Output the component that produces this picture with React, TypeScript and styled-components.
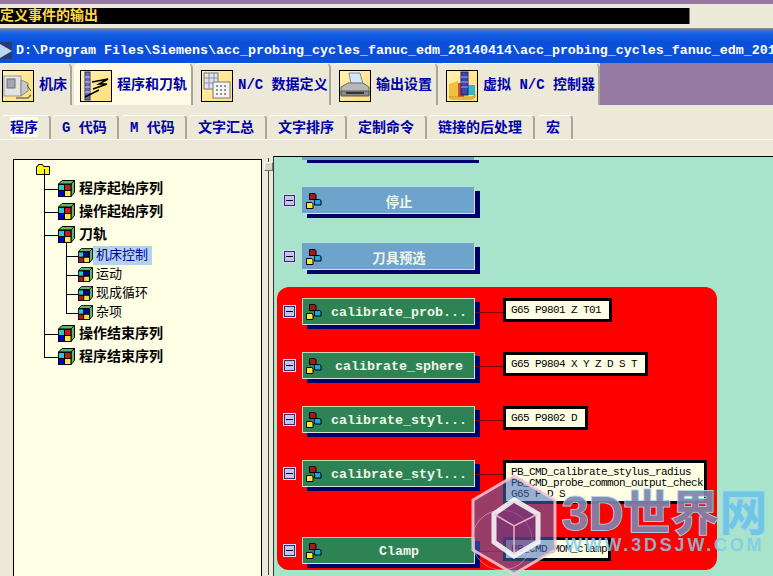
import React from "react";
import styled, { createGlobalStyle } from "styled-components";

const FONT = `"Liberation Mono", "Noto Sans CJK SC", monospace`;
const CREAM = "#ece9d8";

const GlobalStyle = createGlobalStyle`
  html, body { margin: 0; padding: 0; background: ${CREAM}; overflow: hidden; }
  #root { width: 773px; height: 576px; }
  * { box-sizing: border-box; }
`;

const Page = styled.div`
  position: relative;
  width: 773px;
  height: 576px;
  overflow: hidden;
  background: ${CREAM};
  font-family: ${FONT};
`;

const TopStrip = styled.div`
  height: 4px;
  background: #9479a3;
`;

const EventBand = styled.div`
  height: 24px;
  padding-top: 4px;
`;

const EventBar = styled.div`
  width: 690px;
  height: 16px;
  background: #000;
  border-right: 1px solid #777;
  color: #ffd84a;
  font-size: 14px;
  font-weight: 700;
  line-height: 17px;
  white-space: nowrap;
`;

const TitleBar = styled.div`
  height: 35px;
  padding-top: 9px;
  display: flex;
  align-items: center;
  gap: 4px;
  background: linear-gradient(#8f97a8 0, #5b6f9c 2px, #2a6fe8 3px, #1560e6 6px, #0a4fd8 14px, #0b50dc 100%);
  color: #fff;
  font-size: 13.33px;
  font-weight: 700;
  white-space: nowrap;
  overflow: hidden;
`;

const TabRow = styled.div`
  height: 42px;
  display: flex;
  align-items: flex-start;
  background: linear-gradient(90deg, ${CREAM} 600px, #9479a3 600px);
`;

const MainTab = styled.div<{ $w: number; $pad: number; $active?: boolean }>`
  width: ${({ $w }) => $w}px;
  height: 42px;
  margin-right: 2px;
  padding: 6px 0 0 ${({ $pad }) => $pad}px;
  display: flex;
  gap: 5px;
  background: ${({ $active }) => ($active ? "#fffbe6" : CREAM)};
  border-right: 2px solid #a9a699;
  border-top: 1px solid #fff;
  border-radius: 5px 5px 0 0;
  color: #0000a8;
  font-size: 14px;
  font-weight: 700;
  line-height: 30px;
  white-space: nowrap;
`;

const TabIcon = styled.div`
  width: 32px;
  height: 32px;
  flex: none;
  border: 1px solid #000;
  background: linear-gradient(135deg, #fff2b0, #ffdf78);
`;

const SubTabRow = styled.div`
  height: 35px;
  margin-bottom: 18px;
  padding: 10px 0 0 1px;
  display: flex;
  align-items: flex-start;
  gap: 2px;
  border-bottom: 1px solid #fbfaf4;
`;

const SubTab = styled.div<{ $w: number }>`
  width: ${({ $w }) => $w}px;
  height: 24px;
  padding-left: 9px;
  border-top: 1px solid #fff;
  border-right: 2px solid #a9a699;
  border-radius: 4px 4px 0 0;
  color: #0000a8;
  font-size: 14px;
  font-weight: 700;
  line-height: 25px;
  white-space: nowrap;
`;

const SubTabLabel = styled.span<{ $active?: boolean }>`
  display: inline-block;
  height: 20px;
  line-height: 22px;
  background: ${({ $active }) => ($active ? "#fffbe6" : "transparent")};
`;

const Workspace = styled.div`
  height: 418px;
  display: flex;
  align-items: flex-start;
  padding-left: 13px;
`;

const TreePane = styled.div`
  width: 249px;
  height: 417px;
  margin-top: 1px;
  border: 1px solid #000;
  border-bottom: none;
  background: #ffffe6;
`;

const Splitter = styled.div`
  position: relative;
  width: 11px;
  height: 417px;
  &::before {
    content: "";
    position: absolute;
    left: 6px;
    top: 0;
    bottom: 0;
    width: 1px;
    background: #444;
  }
`;

const SplitterGrip = styled.div`
  position: absolute;
  left: 2px;
  top: 4px;
  width: 9px;
  height: 9px;
  background: #d8d5c8;
  border: 1px solid #fff;
  border-right-color: #777;
  border-bottom-color: #777;
`;

const TreeRoot = styled.div`
  height: 17px;
  padding: 4px 0 0 22px;
  display: flex;
  align-items: flex-start;
`;

const TreeList = styled.ul<{ $child?: boolean }>`
  list-style: none;
  margin: 0;
  padding: 0 0 0 ${({ $child }) => ($child ? 22 : 30)}px;
`;

const TreeItem = styled.li<{ $child?: boolean }>`
  position: relative;
  &::before {
    content: "";
    position: absolute;
    left: 0;
    top: ${({ $child }) => ($child ? "-3px" : "-8px")};
    bottom: 0;
    width: 1px;
    background: #000;
  }
  &:last-child::before {
    bottom: auto;
    height: ${({ $child }) => ($child ? "13px" : "20px")};
  }
`;

const TreeRow = styled.div<{ $child?: boolean }>`
  position: relative;
  height: ${({ $child }) => ($child ? 19 : 23)}px;
  padding-left: ${({ $child }) => ($child ? 12 : 14)}px;
  display: flex;
  align-items: center;
  color: #000;
  font-size: ${({ $child }) => ($child ? 13 : 14)}px;
  font-weight: ${({ $child }) => ($child ? 400 : 700)};
  white-space: nowrap;
  &::before {
    content: "";
    position: absolute;
    left: 0;
    top: 50%;
    width: ${({ $child }) => ($child ? 12 : 14)}px;
    height: 1px;
    background: #000;
  }
`;

const TreeLabel = styled.span<{ $selected?: boolean; $child?: boolean }>`
  margin-left: ${({ $child }) => ($child ? 0 : 4)}px;
  padding: 0 ${({ $child }) => ($child ? 4 : 0)}px 0 ${({ $child }) => ($child ? 3 : 0)}px;
  height: ${({ $child }) => ($child ? 19 : 20)}px;
  line-height: ${({ $child }) => ($child ? 19 : 20)}px;
  background: ${({ $selected }) => ($selected ? "#b4d4ec" : "transparent")};
  color: ${({ $selected }) => ($selected ? "#0000a8" : "#000")};
`;

const DiagramPane = styled.div`
  flex: 1;
  height: 420px;
  margin-top: -2px;
  border-top: 1px solid #000;
  border-left: 1px solid #333;
  background: #a8e4cc;
  overflow: hidden;
`;

const TopStub = styled.div`
  width: 172px;
  height: 3px;
  margin-left: 28px;
  background: #6ea3cc;
  box-shadow: 5px 3px 0 #00006a;
`;

const PlainRow = styled.div<{ $top: number }>`
  margin-top: ${({ $top }) => $top}px;
  padding-left: 9px;
  display: flex;
  align-items: flex-start;
`;

const Expander = styled.div`
  width: 13px;
  height: 13px;
  margin-top: 7px;
  margin-right: 6px;
  flex: none;
  display: flex;
  align-items: center;
  justify-content: center;
  background: #c4c4f0;
  border: 1px solid #d8d8ff;
  box-shadow: inset 0 0 0 1px #303060;
  &::after {
    content: "";
    width: 7px;
    height: 1px;
    background: #000;
  }
`;

const NodeButton = styled.div<{ $tone: "blue" | "green" }>`
  width: 173px;
  height: 27px;
  flex: none;
  padding-left: 3px;
  display: flex;
  align-items: center;
  background: ${({ $tone }) => ($tone === "blue" ? "#6ea3cc" : "#2e8355")};
  border: 1px solid ${({ $tone }) => ($tone === "blue" ? "#6ea3cc" : "#c4d8b8")};
  border-right-color: #d8e4d8;
  border-bottom-color: #d8e4d8;
  box-shadow: 5px 4px 0 #00006a;
  color: #f0f6ea;
  font-size: 13.33px;
  font-weight: 700;
  white-space: nowrap;
`;

const NodeLabel = styled.span`
  flex: 1;
  text-align: center;
  padding: 2px 0 0 2px;
`;

const RedZone = styled.div`
  width: 440px;
  height: 283px;
  margin: 17px 0 0 3px;
  padding-top: 11px;
  background: #ff0000;
  border-radius: 12px;
`;

const RedRow = styled.div<{ $top: number }>`
  margin-top: ${({ $top }) => $top}px;
  padding-left: 6px;
  display: flex;
  align-items: flex-start;
`;

const Connector = styled.div`
  width: 28px;
  height: 1px;
  margin-top: 14px;
  flex: none;
  background: #800000;
`;

const CodeBox = styled.div<{ $w?: number; $lines: number }>`
  width: ${({ $w }) => ($w ? `${$w}px` : "auto")};
  padding: 4px 8px ${({ $lines }) => ($lines > 1 ? 1 : 3)}px 5px;
  border: 3px solid #000;
  background: #ffffe6;
  color: #000;
  font-size: 11px;
  letter-spacing: -0.6px;
  line-height: 11px;
  white-space: pre;
  overflow: hidden;
`;

const CodeLine = styled.div`
  height: 11px;
`;

const Watermark = styled.div`
  position: absolute;
  left: 470px;
  top: 474px;
  width: 303px;
  height: 102px;
  pointer-events: none;
`;

const WatermarkTitle = styled.div`
  position: absolute;
  left: 92px;
  top: 12px;
  color: #7f84ad;
  opacity: 0.92;
  font-family: "Liberation Sans", "Noto Sans CJK SC", sans-serif;
  font-size: 48px;
  font-weight: 700;
  line-height: 56px;
  white-space: nowrap;
  -webkit-text-stroke: 2px #a8d8ec;
  paint-order: stroke fill;
`;

const WatermarkAccent = styled.span`
  color: #6cc4e8;
`;

const WatermarkUrl = styled.div`
  position: absolute;
  left: 95px;
  top: 60px;
  color: rgba(127, 203, 232, 0.85);
  font-family: "Liberation Sans", sans-serif;
  font-size: 18px;
  font-weight: 700;
  letter-spacing: 2.8px;
  line-height: 22px;
  white-space: nowrap;
`;

const FolderIcon = () => (
  <svg width="14" height="11" viewBox="0 0 14 11">
    <path d="M.5 2.5h1l1-2h4l1 2h6v8H.5z" fill="#ffff00" stroke="#000" />
  </svg>
);

const TreeCube = ({ child }: { child?: boolean }) => {
  const size = child ? 15 : 17;
  const cells = child
    ? ["#28c8d8", "#0000a8", "#b01818", "#f0e040"]
    : ["#28c8d8", "#d01818", "#0000c8", "#ffe840"];
  return (
    <svg width={size} height={size} viewBox="0 0 17 17" style={{ flex: "none", position: "relative" }}>
      <path d="M4 .5h12.5v12L13 16.500V4H.5z" fill="#60b860" stroke="#000" />
      <path d="M13 4l3.500-3.500" stroke="#000" />
      <rect x=".5" y="4.500" width="6" height="6" fill={cells[0]} stroke="#000" />
      <rect x="6.500" y="4.500" width="6.500" height="6" fill={cells[1]} stroke="#000" />
      <rect x=".5" y="10.500" width="6" height="6" fill={cells[2]} stroke="#000" />
      <rect x="6.500" y="10.500" width="6.500" height="6" fill={cells[3]} stroke="#000" />
    </svg>
  );
};

const NodeIcon = () => (
  <svg width="16" height="16" viewBox="0 0 16 16" style={{ flex: "none" }}>
    <path d="M3.500.5h5l1.500 1v5h-6.500z" fill="#a81818" stroke="#000" />
    <path d="M8.500 6.500h5l1.500 1v4.500h-6.500z" fill="#18a8e0" stroke="#000" />
    <path d="M.5 9.500h5l1.500 1v5h-6.500z" fill="#f0e840" stroke="#000" />
  </svg>
);

const MachineGlyph = () => (
  <svg width="30" height="30" viewBox="0 0 30 30">
    <rect x="1" y="5" width="17" height="20" fill="#e4e4e4" stroke="#999" />
    <rect x="4" y="8" width="8" height="9" fill="#a0a8b0" stroke="#707070" />
    <path d="M18 9l7 3v8l-7 5z" fill="#c8c8c8" stroke="#888" />
    <path d="M13 27h12l3-3" fill="none" stroke="#777" strokeWidth="1.500" />
    <path d="M24 14l4 6" stroke="#555" />
  </svg>
);

const ProgramGlyph = () => (
  <svg width="30" height="30" viewBox="0 0 30 30">
    <rect x="4" y="1" width="5" height="28" fill="#6a6ab8" stroke="#303070" />
    <path d="M4 6h5M4 11h5M4 16h5M4 21h5" stroke="#d0d0f0" />
    <path d="M11 11l16-3-9 5h8l-14 5M4 26l14-7" fill="none" stroke="#000" strokeWidth="1.500" />
  </svg>
);

const DataGlyph = () => (
  <svg width="30" height="30" viewBox="0 0 30 30">
    <rect x="2" y="2" width="14" height="16" fill="#e0e4f0" stroke="#777" />
    <path d="M2 7h14M2 12h14M7 2v16M12 2v16" stroke="#8890a8" />
    <rect x="11" y="11" width="17" height="16" fill="#f4f4f4" stroke="#777" />
    <path d="M14 15h2M18 15h2M22 15h2M14 19h2M18 19h2M22 19h2M14 23h2M18 23h2M22 23h2" stroke="#333" />
  </svg>
);

const PrinterGlyph = () => (
  <svg width="30" height="30" viewBox="0 0 30 30">
    <path d="M9 2h11l3 11H11z" fill="#cfe8f4" stroke="#88a" />
    <path d="M1 16l7-4h15l6 4v8H1z" fill="#b8b8b8" stroke="#666" />
    <path d="M1 20h28v5H1z" fill="#8a8a8a" stroke="#555" />
    <rect x="6" y="21" width="18" height="2" fill="#333" />
  </svg>
);

const ControllerGlyph = () => (
  <svg width="30" height="30" viewBox="0 0 30 30">
    <path d="M2 13l9-3v16H2z" fill="#f0c040" />
    <path d="M11 12h6v14h-6z" fill="#e04828" />
    <path d="M21 14h7v10h-7z" fill="#30b8c8" />
    <path d="M2 26h24l2-3v3l-3 2H4z" fill="#f8d870" stroke="#c09020" />
    <rect x="14" y="1" width="7" height="23" fill="#3848b0" stroke="#202060" />
    <path d="M14 6h7M14 11h7M14 16h7" stroke="#a0a8e8" />
  </svg>
);

const TitleIcon = () => (
  <svg width="12" height="17" viewBox="0 0 12 17" style={{ flex: "none" }}>
    <rect width="12" height="17" fill="#2a3a70" />
    <path d="M0 2l12 7-12 7z" fill="#b8d8f0" />
  </svg>
);

const mainTabs = [
  { label: "机床", w: 72, pad: 2, glyph: <MachineGlyph /> },
  { label: "程序和刀轨", w: 119, pad: 6, glyph: <ProgramGlyph />, active: true },
  { label: "N/C 数据定义", w: 136, pad: 6, glyph: <DataGlyph /> },
  { label: "输出设置", w: 105, pad: 6, glyph: <PrinterGlyph /> },
  { label: "虚拟 N/C 控制器", w: 160, pad: 6, glyph: <ControllerGlyph /> },
];

const subTabs = [
  { label: "程序", w: 50, active: true },
  { label: "G 代码", w: 66 },
  { label: "M 代码", w: 66 },
  { label: "文字汇总", w: 78 },
  { label: "文字排序", w: 78 },
  { label: "定制命令", w: 78 },
  { label: "链接的后处理", w: 106 },
  { label: "宏", w: 36 },
];

const redRows = [
  { label: "calibrate_prob...", top: 0, code: ["G65 P9801 Z T01"] },
  { label: "calibrate_sphere", top: 27, code: ["G65 P9804 X Y Z D S T"] },
  { label: "calibrate_styl...", top: 27, code: ["G65 P9802 D"] },
  {
    label: "calibrate_styl...",
    top: 27,
    w: 204,
    code: ["PB_CMD_calibrate_stylus_radius", "PB_CMD_probe_common_output_check", "G65 P D S"],
  },
  { label: "Clamp", top: 33, w: 108, code: ["PB_CMD_MOM_clamp"] },
];

const App: React.FC = () => (
  <Page>
    <GlobalStyle />
    <TopStrip />
    <EventBand>
      <EventBar>定义事件的输出</EventBar>
    </EventBand>
    <TitleBar>
      <TitleIcon />
      D:\Program Files\Siemens\acc_probing_cycles_fanuc_edm_20140414\acc_probing_cycles_fanuc_edm_201
    </TitleBar>
    <TabRow>
      {mainTabs.map((tab) => (
        <MainTab key={tab.label} $w={tab.w} $pad={tab.pad} $active={tab.active}>
          <TabIcon>{tab.glyph}</TabIcon>
          {tab.label}
        </MainTab>
      ))}
    </TabRow>
    <SubTabRow>
      {subTabs.map((tab) => (
        <SubTab key={tab.label} $w={tab.w}>
          <SubTabLabel $active={tab.active}>{tab.label}</SubTabLabel>
        </SubTab>
      ))}
    </SubTabRow>
    <Workspace>
      <TreePane>
        <TreeRoot>
          <FolderIcon />
        </TreeRoot>
        <TreeList>
          <TreeItem>
            <TreeRow><TreeCube /><TreeLabel>程序起始序列</TreeLabel></TreeRow>
          </TreeItem>
          <TreeItem>
            <TreeRow><TreeCube /><TreeLabel>操作起始序列</TreeLabel></TreeRow>
          </TreeItem>
          <TreeItem>
            <TreeRow><TreeCube /><TreeLabel>刀轨</TreeLabel></TreeRow>
            <TreeList $child>
              <TreeItem $child>
                <TreeRow $child><TreeCube child /><TreeLabel $child $selected>机床控制</TreeLabel></TreeRow>
              </TreeItem>
              <TreeItem $child>
                <TreeRow $child><TreeCube child /><TreeLabel $child>运动</TreeLabel></TreeRow>
              </TreeItem>
              <TreeItem $child>
                <TreeRow $child><TreeCube child /><TreeLabel $child>现成循环</TreeLabel></TreeRow>
              </TreeItem>
              <TreeItem $child>
                <TreeRow $child><TreeCube child /><TreeLabel $child>杂项</TreeLabel></TreeRow>
              </TreeItem>
            </TreeList>
          </TreeItem>
          <TreeItem>
            <TreeRow><TreeCube /><TreeLabel>操作结束序列</TreeLabel></TreeRow>
          </TreeItem>
          <TreeItem>
            <TreeRow><TreeCube /><TreeLabel>程序结束序列</TreeLabel></TreeRow>
          </TreeItem>
        </TreeList>
      </TreePane>
      <Splitter>
        <SplitterGrip />
      </Splitter>
      <DiagramPane>
        <TopStub />
        <PlainRow $top={27}>
          <Expander />
          <NodeButton $tone="blue"><NodeIcon /><NodeLabel>停止</NodeLabel></NodeButton>
        </PlainRow>
        <PlainRow $top={29}>
          <Expander />
          <NodeButton $tone="blue"><NodeIcon /><NodeLabel>刀具预选</NodeLabel></NodeButton>
        </PlainRow>
        <RedZone>
          {redRows.map((row) => (
            <RedRow key={row.label + row.code[0]} $top={row.top}>
              <Expander />
              <NodeButton $tone="green"><NodeIcon /><NodeLabel>{row.label}</NodeLabel></NodeButton>
              <Connector />
              <CodeBox $w={row.w} $lines={row.code.length}>
                {row.code.map((line) => (
                  <CodeLine key={line}>{line}</CodeLine>
                ))}
              </CodeBox>
            </RedRow>
          ))}
        </RedZone>
      </DiagramPane>
    </Workspace>
    <Watermark>
      <svg width="90" height="102" viewBox="0 0 90 102">
        <path d="M44 2l41 24v50L44 100 3 76V26z" fill="rgba(70,110,190,.55)" stroke="rgba(250,200,210,.85)" strokeWidth="3" />
        <circle cx="32" cy="66" r="30" fill="none" stroke="rgba(250,200,210,.5)" />
        <path d="M44 26l24 14v28L44 82 24 68V40z" fill="rgba(110,50,120,.55)" stroke="#fff" strokeWidth="5" strokeOpacity=".85" />
        <path d="M24 40l20 12 24-12M44 52v28" fill="none" stroke="rgba(250,200,210,.85)" strokeWidth="1.500" />
      </svg>
      <WatermarkTitle>3D世界<WatermarkAccent>网</WatermarkAccent></WatermarkTitle>
      <WatermarkUrl>WWW.3DSJW.COM</WatermarkUrl>
    </Watermark>
  </Page>
);

export default App;
